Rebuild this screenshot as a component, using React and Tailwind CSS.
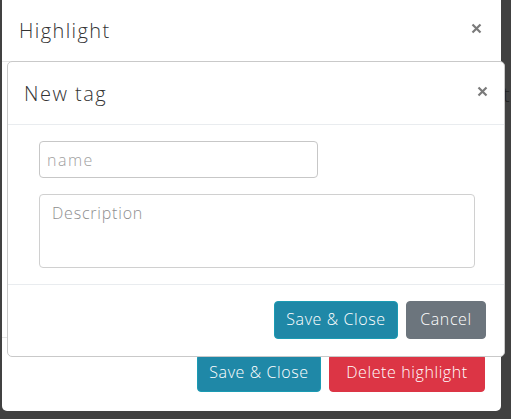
import React from "react";

const font = { fontFamily: '"Open Sans", "Noto Sans", sans-serif' };

function CloseX({ className = "" }) {
  return (
    <svg className={className} width="11" height="11" viewBox="0 0 11 11">
      <path d="M1.5 1.5 L9.5 9.5 M9.5 1.5 L1.5 9.5" stroke="#7a7a7a" strokeWidth="2.2" strokeLinecap="butt" />
    </svg>
  );
}

export default function App() {
  return (
    <div
      className="relative w-[511px] h-[419px] overflow-hidden bg-[#414141] font-light"
      style={font}
    >
      {/* faint background text behind backdrop */}
      <div className="absolute left-[503px] top-[80px] text-[20px] text-[#222]">t</div>

      {/* Outer modal */}
      <div className="relative ml-[2px] mt-[-10px] w-[499px] h-[421px] bg-white rounded-[5px] flex flex-col">
        <div className="h-[72px] flex items-center justify-between pl-[17px] pr-[19px] pt-[10px] border-b border-[#e5e5e5]">
          <span className="text-[20px] text-[#333] tracking-[1.4px]">Highlight</span>
          <CloseX className="mt-[-5px]" />
        </div>
        <div className="flex-1" />
        <div className="h-[66px] border-t border-[#e5e5e5] flex items-start justify-end gap-[8px] pt-[16px] pr-[16px]">
          <button className="w-[124px] h-[38px] pb-[2px] rounded-[4px] bg-[#1f88a7] border border-[#1b9bb3] text-white text-[16px] font-light tracking-[0.6px]">
            Save &amp; Close
          </button>
          <button className="w-[156px] h-[38px] pb-[2px] rounded-[4px] bg-[#dc3545] border border-[#dc3545] text-white text-[16px] font-light tracking-[0.6px]">
            Delete highlight
          </button>
        </div>
        <div className="h-[8px]" />
      </div>

      {/* Inner modal (stacked dialog) */}
      <div className="absolute left-[7px] top-[61px] w-[498px] h-[296px] bg-white border border-[#c9c9c9] rounded-[5px] flex flex-col">
        <div className="h-[63px] flex items-center justify-between pl-[16px] pr-[16px] border-b border-[#e9ecef]">
          <span className="text-[20px] text-[#333] mt-[2px] tracking-[1.5px]">New tag</span>
          <CloseX className="mt-[-3px]" />
        </div>
        <div className="flex flex-col gap-[16px] pt-[16px] pb-[16px] pl-[31px]">
          <input
            placeholder="name"
            className="w-[279px] h-[37px] border border-[#c7c7c7] rounded-[4px] px-[7px] text-[16px] placeholder-[#a0a0a0] outline-none font-light tracking-[1.5px]"
            style={font}
          />
          <textarea
            placeholder="Description"
            className="w-[436px] h-[74px] border border-[#d0d0d0] rounded-[4px] px-[12px] pt-[6px] text-[16px] placeholder-[#8e8e8e] outline-none resize-none font-light tracking-[0.8px]"
            style={font}
          />
        </div>
        <div className="flex-1 border-t border-[#e9ecef] flex items-start justify-end gap-[8px] pt-[16px] pr-[18px]">
          <button className="w-[124px] h-[38px] pb-[2px] rounded-[4px] bg-[#1f88a7] border border-[#1b9bb3] text-white text-[16px] font-light tracking-[0.6px]">
            Save &amp; Close
          </button>
          <button className="w-[80px] h-[38px] pb-[2px] rounded-[4px] bg-[#6c757d] border border-[#6c757d] text-white text-[16px] font-light tracking-[0.6px]">
            Cancel
          </button>
        </div>
      </div>
    </div>
  );
}
